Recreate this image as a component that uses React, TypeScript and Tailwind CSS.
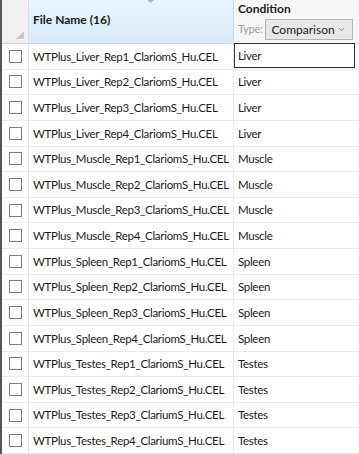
import { ChevronDown } from "lucide-react";

const rows = [
  ["WTPlus_Liver_Rep1_ClariomS_Hu.CEL", "Liver"],
  ["WTPlus_Liver_Rep2_ClariomS_Hu.CEL", "Liver"],
  ["WTPlus_Liver_Rep3_ClariomS_Hu.CEL", "Liver"],
  ["WTPlus_Liver_Rep4_ClariomS_Hu.CEL", "Liver"],
  ["WTPlus_Muscle_Rep1_ClariomS_Hu.CEL", "Muscle"],
  ["WTPlus_Muscle_Rep2_ClariomS_Hu.CEL", "Muscle"],
  ["WTPlus_Muscle_Rep3_ClariomS_Hu.CEL", "Muscle"],
  ["WTPlus_Muscle_Rep4_ClariomS_Hu.CEL", "Muscle"],
  ["WTPlus_Spleen_Rep1_ClariomS_Hu.CEL", "Spleen"],
  ["WTPlus_Spleen_Rep2_ClariomS_Hu.CEL", "Spleen"],
  ["WTPlus_Spleen_Rep3_ClariomS_Hu.CEL", "Spleen"],
  ["WTPlus_Spleen_Rep4_ClariomS_Hu.CEL", "Spleen"],
  ["WTPlus_Testes_Rep1_ClariomS_Hu.CEL", "Testes"],
  ["WTPlus_Testes_Rep2_ClariomS_Hu.CEL", "Testes"],
  ["WTPlus_Testes_Rep3_ClariumS_Hu.CEL", "Testes"],
  ["WTPlus_Testes_Rep4_ClariumS_Hu.CEL", "Testes"],
];

export default function App() {
  return (
    <div
      className="w-[359px] h-[454px] overflow-hidden bg-white border-l-2 border-[#555] text-[11.5px] tracking-[-0.3px] text-[#1b1b1b]"
      style={{ fontFamily: 'Lato, "Noto Sans", sans-serif' }}
    >
      {/* header */}
      <div className="flex h-[44px] border-b border-[#d5d5d5]">
        <div className="relative w-[27px] shrink-0 bg-[#f0f0f0] border-r border-[#dcdcdc]">
          {/* select-all corner glyph */}
          <svg className="absolute right-[4px] bottom-[4px]" width="8" height="8" viewBox="0 0 8 8">
            <polygon points="8,0 8,8 0,8" fill="#c8c8c8" />
          </svg>
        </div>
        <div className="relative w-[205px] shrink-0 bg-gradient-to-b from-[#eaf4fc] to-[#d8eaf8] border-r border-[#c6dcee] flex items-center pl-[4px] pb-[3px]">
          <svg className="absolute left-[118px] top-0" width="7" height="3" viewBox="0 0 7 3">
            <polygon points="0,0 7,0 3.5,3" fill="#b5b5b5" />
          </svg>
          <span className="font-bold text-[12px] tracking-normal">File Name (16)</span>
        </div>
        <div className="flex-1 bg-[#f7f7f7] pl-[4px] pr-[6px] pt-[1px]">
          <div className="font-bold text-[12px] tracking-normal leading-[16px]">Condition</div>
          <div className="flex items-center gap-[3px] mt-[2px]">
            <span className="text-[#a0a0a0] text-[11px]">Type:</span>
            <div className="flex-1 h-[21px] flex items-center justify-between bg-[#e8e8e8] border border-[#b4b4b4] pl-[5px] pr-[6px]">
              <span className="text-[12px] tracking-normal">Comparison</span>
              <ChevronDown size={9} strokeWidth={2} className="text-[#777]" />
            </div>
          </div>
        </div>
      </div>

      {/* rows */}
      {rows.map(([file, cond], i) => (
        <div key={file} className="flex h-[25.625px] border-b border-[#ececec]">
          <div className="w-[27px] shrink-0 flex items-center justify-center border-r border-[#e6e6e6]">
            <div className="w-[13px] h-[13px] border border-[#7d7d7d] bg-white" />
          </div>
          <div className="w-[205px] shrink-0 flex items-center pl-[4px] border-r border-[#ececec] whitespace-nowrap">
            {file}
          </div>
          <div className="flex-1 pr-[4px]">
            <div
              className={
                i === 0
                  ? "h-full flex items-center pl-[3px] border border-[#333] -mt-px"
                  : "h-full flex items-center pl-[4px]"
              }
            >
              {cond}
            </div>
          </div>
        </div>
      ))}
    </div>
  );
}
